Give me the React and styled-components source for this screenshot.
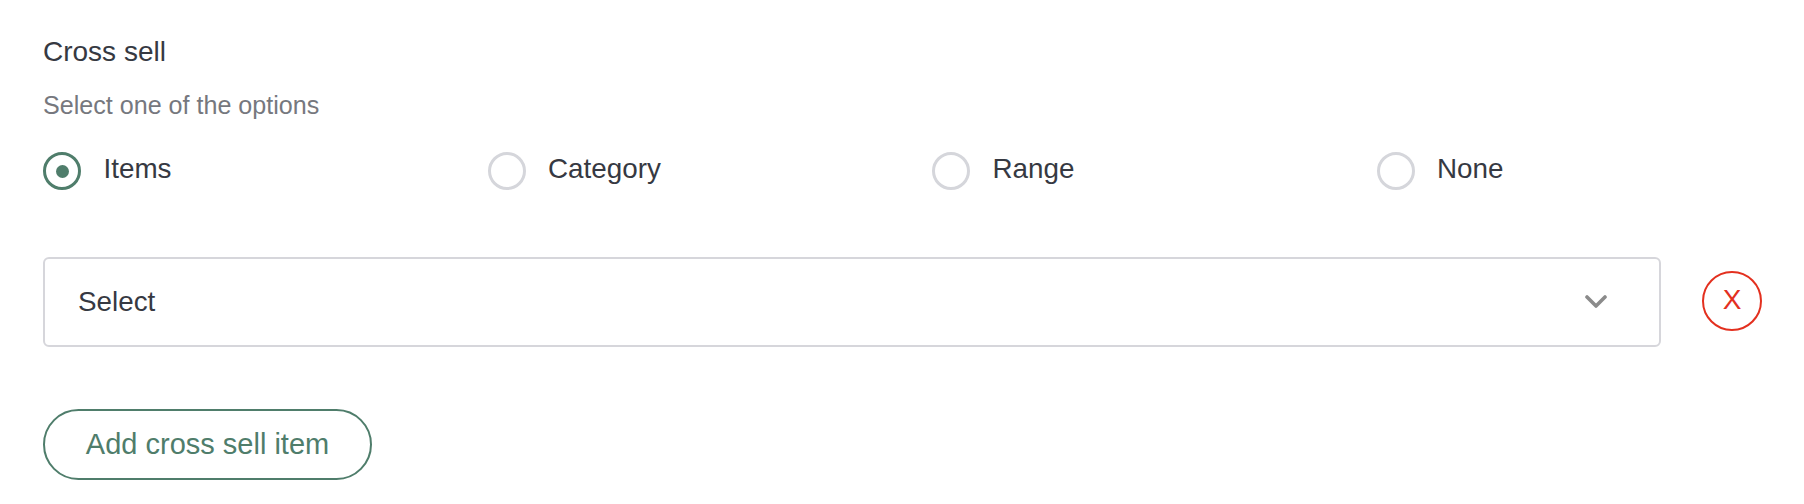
import React, { useState } from 'react'
import styled, { createGlobalStyle } from 'styled-components';

const GlobalStyle = createGlobalStyle`
body {
  margin: 0;
  background: #ffffff;
  font-family: "Liberation Sans", Arial, sans-serif;
}
`;

const green = '#4f7d6b';

const Container = styled.div`
display: flex;
flex-direction: column;
align-items: flex-start;
padding: 36px 42px 24px 43px;
`;

const Title = styled.h2`
margin: 0;
font-size: 28px;
line-height: 32px;
font-weight: 400;
color: #363942;
`;

const Hint = styled.p`
margin: 22px 0 0 0;
font-size: 25.1px;
line-height: 30px;
color: #76787e;
`;

const OptionGrid = styled.div`
display: grid;
grid-template-columns: repeat(3, 444.5px) 1fr;
align-self: stretch;
margin-top: 32px;
`;

const Option = styled.label`
display: flex;
align-items: flex-start;
gap: 22.5px;
cursor: pointer;
`;

const RadioCircle = styled.span`
box-sizing: border-box;
display: flex;
align-items: center;
justify-content: center;
width: 38px;
height: 38px;
border-radius: 50%;
border: 3.6px solid ${p => (p.$checked ? green : '#d5d6db')};

&::after {
  content: '';
  width: 13px;
  height: 13px;
  border-radius: 50%;
  background: ${green};
  display: ${p => (p.$checked ? 'block' : 'none')};
}
`;

const OptionLabel = styled.span`
font-size: 27.8px;
line-height: 33px;
color: #363942;
`;

const SelectRow = styled.div`
display: flex;
align-items: center;
gap: 41px;
align-self: stretch;
margin-top: 67px;
`;

const SelectBox = styled.div`
box-sizing: border-box;
flex: 1;
height: 90px;
display: flex;
align-items: center;
justify-content: space-between;
padding: 0 52px 0 33px;
border: 2px solid #d6d6db;
border-radius: 6px;
font-size: 27.8px;
color: #363942;
`;

const RemoveButton = styled.button`
box-sizing: border-box;
flex: 0 0 auto;
width: 60px;
height: 60px;
margin-top: -3px;
padding: 0 0 1px 0;
border-radius: 50%;
border: 2px solid #e3301f;
background: #fff;
color: #e3301f;
font-family: "Liberation Sans", Arial, sans-serif;
font-size: 28px;
display: flex;
align-items: center;
justify-content: center;
cursor: pointer;
`;

const AddButton = styled.button`
box-sizing: border-box;
margin-top: 62px;
width: 329px;
height: 71px;
border-radius: 36px;
border: 2px solid ${green};
background: #fff;
color: ${green};
font-family: "Liberation Sans", Arial, sans-serif;
font-size: 29px;
padding: 0;
cursor: pointer;
`;

const Chevron = () => (
  <svg width="22" height="14" viewBox="0 0 22 14">
    <polyline points="2,2 11,11 20,2" fill="none" stroke="#8b8b8b" strokeWidth="3.6" strokeLinecap="round" strokeLinejoin="round" />
  </svg>
);

const options = ['Items', 'Category', 'Range', 'None'];

export default function App() {
  const [selected, setSelected] = useState('Items');

  return (
    <Container>
      <GlobalStyle />
      <Title>Cross sell</Title>
      <Hint>Select one of the options</Hint>
      <OptionGrid>
        {options.map(o => (
          <Option key={o} onClick={() => setSelected(o)}>
            <RadioCircle $checked={selected === o} />
            <OptionLabel>{o}</OptionLabel>
          </Option>
        ))}
      </OptionGrid>
      <SelectRow>
        <SelectBox>
          <span>Select</span>
          <Chevron />
        </SelectBox>
        <RemoveButton>X</RemoveButton>
      </SelectRow>
      <AddButton>Add cross sell item</AddButton>
    </Container>
  )
}
